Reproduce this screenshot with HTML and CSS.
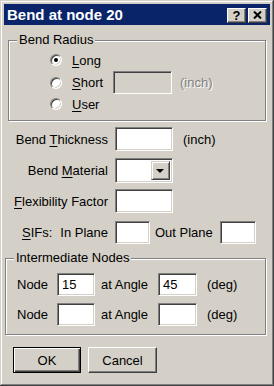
FILE: index.html
```html
<!DOCTYPE html>
<html lang="en">
<head>
    <meta charset="UTF-8">
    <title>Bend at node 20</title>
    <link rel="stylesheet" href="styles.css">
</head>
<body>
    <div class="window">
        <div class="titlebar">
            <span class="title">Bend at node 20</span>
            <div class="tb-buttons">
                <span class="tb-btn help">?</span>
                <span class="tb-btn">
                    <svg width="9" height="8" viewBox="0 0 9 8"><path d="M1 0.5 L8 7.5 M8 0.5 L1 7.5" stroke="#000" stroke-width="2"/></svg>
                </span>
            </div>
        </div>

        <div class="client">
            <fieldset class="group radius">
                <legend>Bend Radius</legend>
                <div class="radio-row">
                    <span class="radio checked"></span>
                    <span class="radio-label"><u>L</u>ong</span>
                </div>
                <div class="radio-row">
                    <span class="radio"></span>
                    <span class="radio-label"><u>S</u>hort</span>
                    <span class="field disabled short"></span>
                    <span class="unit muted">(inch)</span>
                </div>
                <div class="radio-row">
                    <span class="radio"></span>
                    <span class="radio-label"><u>U</u>ser</span>
                </div>
            </fieldset>

            <div class="form">
                <span class="label">Bend <u>T</u>hickness</span>
                <span class="field"></span>
                <span class="unit">(inch)</span>

                <span class="label">Bend <u>M</u>aterial</span>
                <span class="field combo"><span class="drop"></span></span>
                <span></span>

                <span class="label"><u>F</u>lexibility Factor</span>
                <span class="field"></span>
                <span></span>

                <div class="sifs">
                    <span class="sif-label"><span><u>S</u>IFs:</span><span>In Plane</span></span>
                    <span class="field sif-in"></span>
                    <span class="out-label">Out Plane</span>
                    <span class="field sif-out"></span>
                </div>
            </div>

            <fieldset class="group nodes">
                <legend>Intermediate Nodes</legend>
                <div class="node-row">
                    <span>Node</span>
                    <span class="field">15</span>
                    <span class="angle-label">at Angle</span>
                    <span class="field">45</span>
                    <span class="deg">(deg)</span>
                </div>
                <div class="node-row">
                    <span>Node</span>
                    <span class="field"></span>
                    <span class="angle-label">at Angle</span>
                    <span class="field"></span>
                    <span class="deg">(deg)</span>
                </div>
            </fieldset>

            <div class="buttons">
                <span class="btn default">OK</span>
                <span class="btn">Cancel</span>
            </div>
        </div>
    </div>
</body>
</html>
```

FILE: styles.css
```css
body {
    margin: 0;
    font-family: "Liberation Sans", Arial, sans-serif;
    font-size: 13px;
    color: #000;
    background: #d4d0c8;
}
u {
    text-decoration-thickness: 1px;
    text-underline-offset: 2px;
}
.window {
    width: 274px;
    height: 386px;
    box-sizing: border-box;
    padding: 4px;
    background: #d4d0c8;
    box-shadow: inset -1px -1px #404040, inset 1px 1px #d4d0c8, inset -2px -2px #808080, inset 2px 2px #fff;
}
.titlebar {
    height: 21px;
    background: #0a246a;
    display: flex;
    align-items: center;
    justify-content: space-between;
    padding: 0 3px;
}
.title {
    color: #fff;
    font-weight: bold;
    font-size: 15px;
}
.tb-buttons {
    display: flex;
    gap: 2px;
    margin-top: 1px;
}
.tb-btn {
    width: 19px;
    height: 15px;
    box-sizing: border-box;
    display: flex;
    align-items: center;
    justify-content: center;
    background: #d4d0c8;
    border: 1px solid;
    border-color: #fff #404040 #404040 #fff;
    box-shadow: inset -1px -1px #808080;
    font-weight: bold;
    font-size: 13px;
    line-height: 1;
}
.client {
    padding: 0 4px 0 1px;
}

/* group boxes */
.group {
    margin: 0;
    padding: 0 8px;
    min-inline-size: 0;
    border: 1px solid #808080;
    box-shadow: inset 1px 1px #fff, 1px 1px #fff;
}
.group legend {
    padding: 0 2px;
    line-height: 16px;
    background: #d4d0c8;
}
.radius {
    margin: 7px 0 0 3px;
    padding-top: 1px;
    padding-bottom: 5px;
}
.radio-row {
    height: 22px;
    display: grid;
    grid-template-columns: 12px 51px 59px auto;
    align-items: center;
    padding-left: 33px;
}
.radio-label {
    padding-left: 10px;
}
.radio {
    width: 12px;
    height: 12px;
    box-sizing: border-box;
    border-radius: 50%;
    background: #fff;
    border: 1px solid;
    border-color: #808080 #fff #fff #808080;
    box-shadow: inset 1px 1px #404040, inset -1px -1px #d4d0c8;
    position: relative;
}
.radio.checked::after {
    content: "";
    position: absolute;
    left: 3px;
    top: 3px;
    width: 4px;
    height: 4px;
    border-radius: 50%;
    background: #000;
}

/* edit boxes */
.field {
    display: block;
    box-sizing: border-box;
    height: 24px;
    background: #fff;
    border: 1px solid;
    border-color: #808080 #fff #fff #808080;
    box-shadow: inset 1px 1px #404040, inset -1px -1px #d4d0c8;
    padding: 3px 0 0 4px;
    line-height: 16px;
}
.field.disabled {
    background: #d4d0c8;
}
.field.short {
    height: 23px;
}
.unit {
    padding-left: 8px;
}
.muted {
    color: #808080;
    text-shadow: 1px 1px #fff;
}
.form {
    margin-top: 6px;
    display: grid;
    grid-template-columns: 103px 58px auto;
    grid-auto-rows: 24px;
    column-gap: 7px;
    row-gap: 7px;
    align-items: center;
}
.form .label {
    text-align: right;
}
.form .unit {
    padding-left: 3px;
}
.combo {
    position: relative;
    height: 25px;
}
.drop {
    position: absolute;
    right: 2px;
    top: 2px;
    width: 19px;
    height: 19px;
    box-sizing: border-box;
    background: #d4d0c8;
    border: 1px solid;
    border-color: #d4d0c8 #404040 #404040 #d4d0c8;
    box-shadow: inset 1px 1px #fff, inset -1px -1px #808080;
}
.drop::after {
    content: "";
    position: absolute;
    left: 4px;
    top: 7px;
    border-left: 4px solid transparent;
    border-right: 4px solid transparent;
    border-top: 4px solid #000;
}
.sifs {
    grid-column: 1 / -1;
    display: flex;
    align-items: center;
    height: 23px;
}
.sif-label {
    width: 103px;
    display: flex;
    justify-content: flex-end;
    gap: 8px;
    white-space: nowrap;
}
.sifs .field {
    height: 23px;
    margin-left: 7px;
}
.sif-in {
    width: 35px;
}
.out-label {
    margin-left: 5px;
    white-space: nowrap;
}
.sif-out {
    width: 36px;
}
.nodes {
    margin: 6px 0 0 0;
    padding-top: 7px;
    padding-bottom: 8px;
}
.node-row {
    display: grid;
    grid-template-columns: 40px 38px 63px 39px auto;
    align-items: center;
    height: 23px;
    padding-left: 3px;
}
.node-row + .node-row {
    margin-top: 7px;
}
.node-row .field {
    height: 23px;
}
.angle-label {
    padding-left: 6px;
}
.deg {
    padding-left: 10px;
}

/* push buttons */
.buttons {
    display: flex;
    gap: 7px;
    margin: 12px 0 0 8px;
}
.btn {
    width: 69px;
    height: 26px;
    box-sizing: border-box;
    display: flex;
    align-items: center;
    justify-content: center;
    background: #d4d0c8;
    border: 1px solid;
    border-color: #fff #404040 #404040 #fff;
    box-shadow: inset -1px -1px #808080;
}
.btn.default {
    width: 68px;
    border: 1px solid #000;
    box-shadow: inset 1px 1px #fff, inset -1px -1px #404040, inset -2px -2px #808080;
}
```
